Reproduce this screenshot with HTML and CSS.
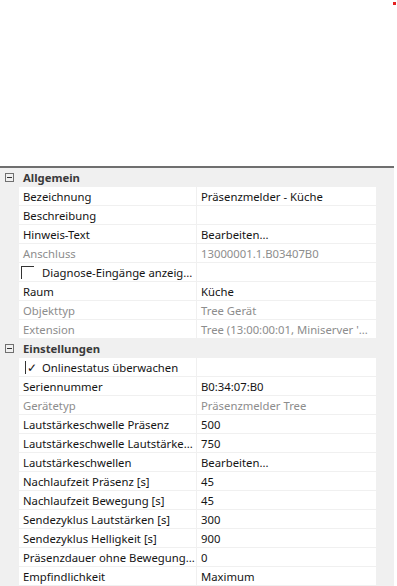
FILE: index.html
```html
<!DOCTYPE html>
<html lang="de">
<head>
  <meta charset="utf-8" />
  <meta name="viewport" content="width=device-width, initial-scale=1.0" />
  <title>Eigenschaften</title>
  <link rel="stylesheet" href="styles.css">
</head>

<body>
  <span class="marker"></span>
  <div class="blank"></div>

  <div class="grid">
    <div class="group">
      <span class="toggle"></span>
      <span class="group-title">Allgemein</span>
    </div>
    <div class="row">
      <span class="name">Bezeichnung</span>
      <span class="value">Präsenzmelder - Küche</span>
    </div>
    <div class="row">
      <span class="name">Beschreibung</span>
      <span class="value"></span>
    </div>
    <div class="row">
      <span class="name">Hinweis-Text</span>
      <span class="value">Bearbeiten...</span>
    </div>
    <div class="row disabled">
      <span class="name">Anschluss</span>
      <span class="value">13000001.1.B03407B0</span>
    </div>
    <div class="row">
      <span class="name check"><span class="box"></span>Diagnose-Eingänge anzeig...</span>
      <span class="value"></span>
    </div>
    <div class="row">
      <span class="name">Raum</span>
      <span class="value">Küche</span>
    </div>
    <div class="row disabled">
      <span class="name">Objekttyp</span>
      <span class="value">Tree Gerät</span>
    </div>
    <div class="row disabled">
      <span class="name">Extension</span>
      <span class="value">Tree (13:00:00:01, Miniserver '...</span>
    </div>

    <div class="group">
      <span class="toggle"></span>
      <span class="group-title">Einstellungen</span>
    </div>
    <div class="row">
      <span class="name check"><span class="box checked">&#10003;</span>Onlinestatus überwachen</span>
      <span class="value"></span>
    </div>
    <div class="row">
      <span class="name">Seriennummer</span>
      <span class="value">B0:34:07:B0</span>
    </div>
    <div class="row disabled">
      <span class="name">Gerätetyp</span>
      <span class="value">Präsenzmelder Tree</span>
    </div>
    <div class="row">
      <span class="name">Lautstärkeschwelle Präsenz</span>
      <span class="value">500</span>
    </div>
    <div class="row">
      <span class="name">Lautstärkeschwelle Lautstärke...</span>
      <span class="value">750</span>
    </div>
    <div class="row">
      <span class="name">Lautstärkeschwellen</span>
      <span class="value">Bearbeiten...</span>
    </div>
    <div class="row">
      <span class="name">Nachlaufzeit Präsenz [s]</span>
      <span class="value">45</span>
    </div>
    <div class="row">
      <span class="name">Nachlaufzeit Bewegung [s]</span>
      <span class="value">45</span>
    </div>
    <div class="row">
      <span class="name">Sendezyklus Lautstärken [s]</span>
      <span class="value">300</span>
    </div>
    <div class="row">
      <span class="name">Sendezyklus Helligkeit [s]</span>
      <span class="value">900</span>
    </div>
    <div class="row">
      <span class="name">Präsenzdauer ohne Bewegung...</span>
      <span class="value">0</span>
    </div>
    <div class="row">
      <span class="name">Empfindlichkeit</span>
      <span class="value">Maximum</span>
    </div>
  </div>
</body>
</html>
```

FILE: styles.css
```css
body {
  margin: 0;
  font-family: "Segoe UI", "Noto Sans", sans-serif;
  font-size: 11.3px;
  color: #141414;
  background: #fff;
  overflow: hidden;
}

.marker {
  position: absolute;
  left: 393px;
  top: 2px;
  width: 3px;
  height: 3px;
  background: #e52222;
}

.blank {
  height: 166px;
}

.grid {
  width: 394px;
  background: #f0f0f0;
  border-top: 2px solid #6f6f6f;
}

.row {
  display: grid;
  grid-template-columns: 19px 178px 179px 18px;
  height: 19px;
}

.name, .value {
  height: 18px;
  line-height: 19px;
  background: #fff;
  padding-left: 4px;
  white-space: nowrap;
  overflow: hidden;
  box-sizing: border-box;
}

.name {
  grid-column: 2;
  border-right: 1px solid #f0f0f0;
}

.value {
  grid-column: 3;
}

.disabled .name, .disabled .value {
  color: #8d8d8d;
}

.check {
  display: flex;
  align-items: center;
  padding-left: 2px;
}

.box {
  width: 13px;
  height: 13px;
  margin-right: 8px;
  box-sizing: border-box;
  border-top: 1px solid #333;
  border-left: 1px solid #333;
  flex-shrink: 0;
}

.box.checked {
  width: 9px;
  margin-left: 4px;
  margin-right: 8px;
  border-top: none;
  font-size: 12px;
  line-height: 13px;
  padding-left: 1px;
  overflow: visible;
}

.group {
  display: flex;
  align-items: center;
  height: 19px;
}

.toggle {
  position: relative;
  width: 9px;
  height: 9px;
  margin: 0 9px 0 5px;
  border: 1px solid #707070;
  box-sizing: border-box;
}

.toggle::after {
  content: "";
  position: absolute;
  left: 1px;
  right: 1px;
  top: 3px;
  height: 1px;
  background: #333;
}

.group-title {
  font-weight: bold;
  color: #3a3a3a;
}
```
